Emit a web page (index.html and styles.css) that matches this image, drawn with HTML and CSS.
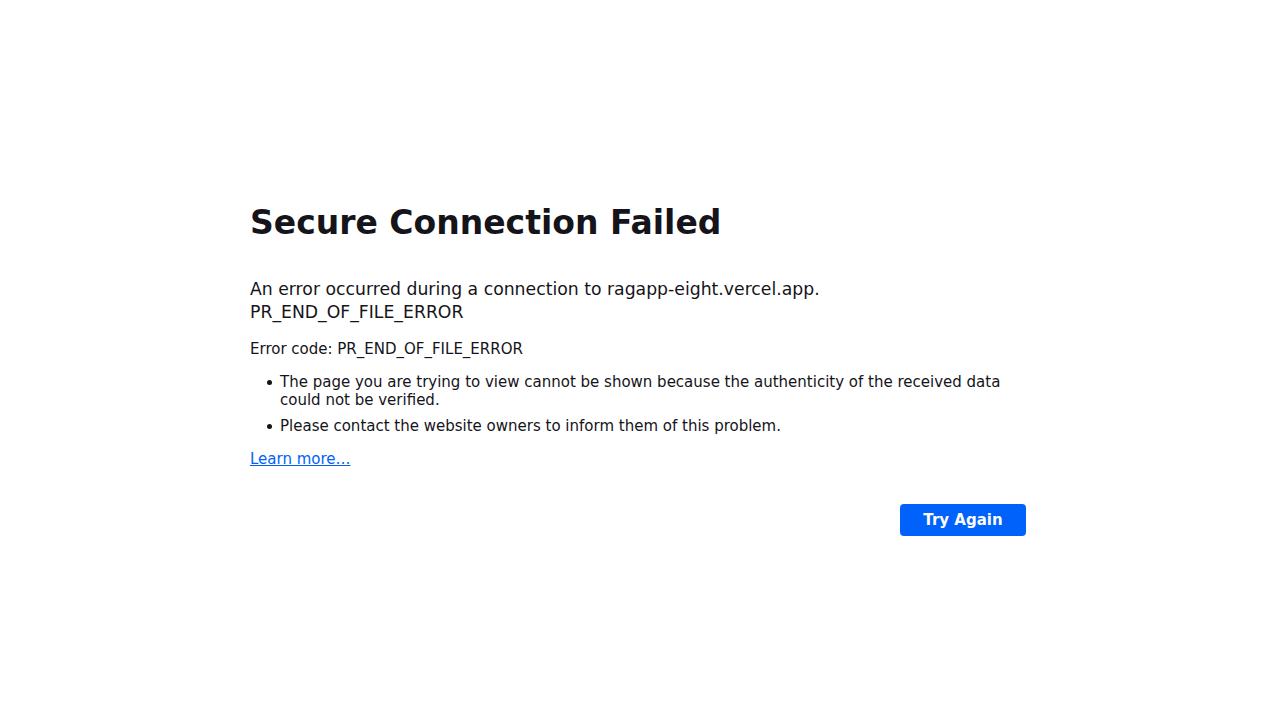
FILE: index.html
```html
<!DOCTYPE html>
<html>
<head>
<meta charset="utf-8">
<link rel="stylesheet" href="styles.css">
<title>Secure Connection Failed</title>
</head>
<body>
<div class="container">
  <h1 class="title">Secure Connection Failed</h1>
  <p class="short-desc">An error occurred during a connection to ragapp-eight.vercel.app. PR_END_OF_FILE_ERROR</p>
  <p class="code">Error code: PR_END_OF_FILE_ERROR</p>
  <ul class="list">
    <li>The page you are trying to view cannot be shown because the authenticity of the received data could not be verified.</li>
    <li>Please contact the website owners to inform them of this problem.</li>
  </ul>
  <a class="learn" href="#">Learn more…</a>
  <div class="actions">
    <button class="btn">Try Again</button>
  </div>
</div>
</body>
</html>
```
FILE: styles.css
```css
html, body {
  margin: 0;
  padding: 0;
  background: #ffffff;
}
body {
  font-family: "DejaVu Sans", sans-serif;
  font-size: 15px;
  color: #15141a;
}
.container {
  width: 776px;
  margin: 0 auto;
  padding: 199px 4px 0 0;
  display: flex;
  flex-direction: column;
}
.title {
  margin: 0;
  font-size: 33px;
  font-weight: 700;
  line-height: 48px;
}
.short-desc {
  margin: 31px 0 0;
  font-size: 17.25px;
  line-height: 23px;
  width: 600px;
}
.code {
  margin: 15px 0 0;
  line-height: 20px;
}
.list {
  margin: 14px 0 0;
  padding-left: 30px;
  list-style: none;
}
.list li {
  margin-bottom: 8px;
  line-height: 18px;
}
.list li::before {
  content: "";
  position: absolute;
  width: 5px;
  height: 5px;
  border-radius: 50%;
  background: #15141a;
  margin-left: -13px;
  margin-top: 7px;
}
.learn {
  margin-top: 6px;
  color: #0062fa;
  align-self: flex-start;
  line-height: 20px;
}
.actions {
  display: flex;
  justify-content: flex-end;
  margin-top: 35px;
}
.btn {
  width: 126px;
  height: 32px;
  border: none;
  border-radius: 4px;
  background: #0062fa;
  color: #fbfbfe;
  font-family: "DejaVu Sans", sans-serif;
  font-size: 15px;
  font-weight: 700;
}
```
